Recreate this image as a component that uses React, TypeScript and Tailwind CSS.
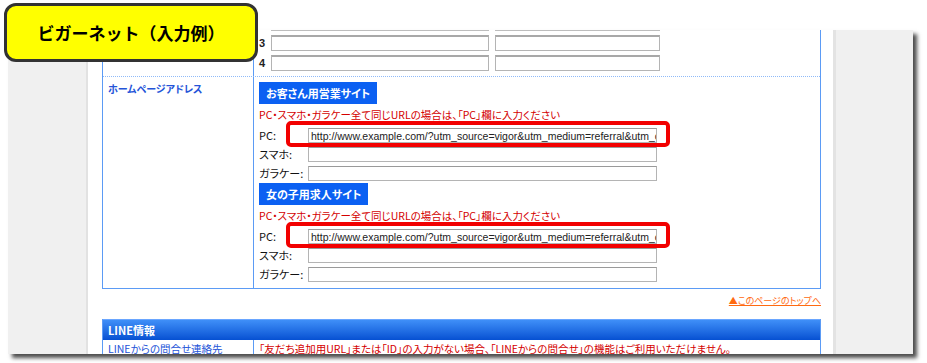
const jp = "[font-family:'Noto_Sans_CJK_JP',sans-serif] [font-feature-settings:'palt']";
const url = "http://www.example.com/?utm_source=vigor&utm_medium=referral&utm_campaign=vigor";

function UrlRow({ label, value, mark }: { label: string; value?: string; mark?: boolean }) {
  return (
    <div className="relative flex h-[19px] items-center">
      <div className={`w-[49px] shrink-0 text-[11px] leading-none text-[#111] ${jp}`}>{label}</div>
      <input
        readOnly
        value={value ?? ""}
        className="h-[15px] w-[349px] border border-[#b4b4b4] border-t-[#9a9a9a] bg-white pl-[2px] text-[10.5px] leading-none text-[#222] outline-none [font-family:'Liberation_Sans',Arial,sans-serif]"
      />
      {mark && (
        <div className="absolute left-[27px] top-[-5px] h-[26px] w-[384px] rounded-[5px] border-[4px] border-[#f20000]" />
      )}
    </div>
  );
}

function SiteBlock({ title }: { title: string }) {
  return (
    <div>
      <div className={`flex h-[22px] w-fit items-center bg-[#0b60f2] px-[7px] text-[11px] font-bold leading-none text-white ${jp}`}>
        {title}
      </div>
      <div className={`flex h-[22px] items-center text-[10.5px] leading-none text-[#d40000] ${jp}`}>
        PC・スマホ・ガラケー全て同じURLの場合は、「PC」欄に入力ください
      </div>
      <UrlRow label="PC:" value={url} mark />
      <UrlRow label="スマホ:" />
      <UrlRow label="ガラケー:" />
    </div>
  );
}

export default function App() {
  return (
    <div className="relative h-[363px] w-[927px] overflow-hidden bg-white">
      <div className="ml-[8px] mt-[30px] flex h-[324px] w-[905px] overflow-hidden shadow-[4px_4px_4px_rgba(0,0,0,0.7)]">
        <div className="w-[80px] shrink-0 border-r-[2px] border-[#e2e2e2] bg-[#f0f0f0]" />

        <div className="w-[745px] shrink-0 bg-white pl-[14px]">
          <div className="w-[719px] border-x border-b border-[#5b9bf5]">
            <div className="flex border-b border-dotted border-[#8fbaf8]">
              <div className="w-[151px] shrink-0 border-r border-[#5b9bf5]" />
              <div className="flex-1 pb-[3px] pl-[5px]">
                <div className="flex h-[1px] gap-[6px] pl-[12px]">
                  <div className="w-[218px] bg-[#bdbdbd]" />
                  <div className="w-[165px] bg-[#bdbdbd]" />
                </div>
                <div className="mt-[2px]">
                  {["3", "4"].map((n) => (
                    <div key={n} className="flex h-[20px] items-center">
                      <div className="w-[12px] text-[11px] font-bold text-[#222] [font-family:'Liberation_Sans',Arial,sans-serif]">{n}</div>
                      <div className="h-[16px] w-[218px] border border-[#b4b4b4] border-t-[2px] border-t-[#a8a8a8]" />
                      <div className="ml-[6px] h-[16px] w-[165px] border border-[#b4b4b4] border-t-[2px] border-t-[#a8a8a8]" />
                    </div>
                  ))}
                </div>
              </div>
            </div>

            <div className="flex">
              <div className={`w-[151px] shrink-0 border-r border-[#5b9bf5] pl-[5px] pt-[6px] text-[10px] font-bold leading-[12px] text-[#2454d8] ${jp}`}>
                ホームページアドレス
              </div>
              <div className="flex-1 pb-[4px] pl-[5px] pt-[5px]">
                <SiteBlock title="お客さん用営業サイト" />
                <SiteBlock title="女の子用求人サイト" />
              </div>
            </div>
          </div>

          <div className="flex h-[22px] w-[719px] items-center justify-end">
            <span className={`text-[9px] leading-none text-[#ff6a10] underline ${jp}`}>▲このページのトップへ</span>
          </div>

          <div className="mt-[8px] w-[719px] border-x border-[#5b9bf5]">
            <div className={`flex h-[21px] items-center border-t border-[#6aa6ff] bg-gradient-to-b from-[#3f8ff8] to-[#0650d2] pl-[5px] text-[11px] font-bold leading-none text-white ${jp}`}>
              LINE情報
            </div>
            <div className="flex">
              <div className={`w-[151px] shrink-0 border-r border-[#5b9bf5] pl-[5px] pt-[3px] text-[10.5px] leading-[12px] text-[#2454d8] ${jp}`}>
                LINEからの問合せ連絡先
              </div>
              <div className={`flex-1 pl-[5px] pt-[3px] text-[10.5px] leading-[12px] text-[#d40000] ${jp}`}>
                「友だち追加用URL」または「ID」の入力がない場合、「LINEからの問合せ」の機能はご利用いただけません。
              </div>
            </div>
          </div>
        </div>

        <div className="w-[80px] shrink-0 border-l-[3px] border-[#e3e3e3] bg-[#f0f0f0]" />
      </div>

      <div className="absolute left-[4px] top-[3px] flex h-[59px] w-[254px] items-center justify-center rounded-[12px] border-[3px] border-[#333] bg-[#ffff00]">
        <span className="text-[17px] font-bold leading-none text-black [font-family:'Noto_Sans_CJK_JP',sans-serif]">ビガーネット（入力例）</span>
      </div>
    </div>
  );
}
